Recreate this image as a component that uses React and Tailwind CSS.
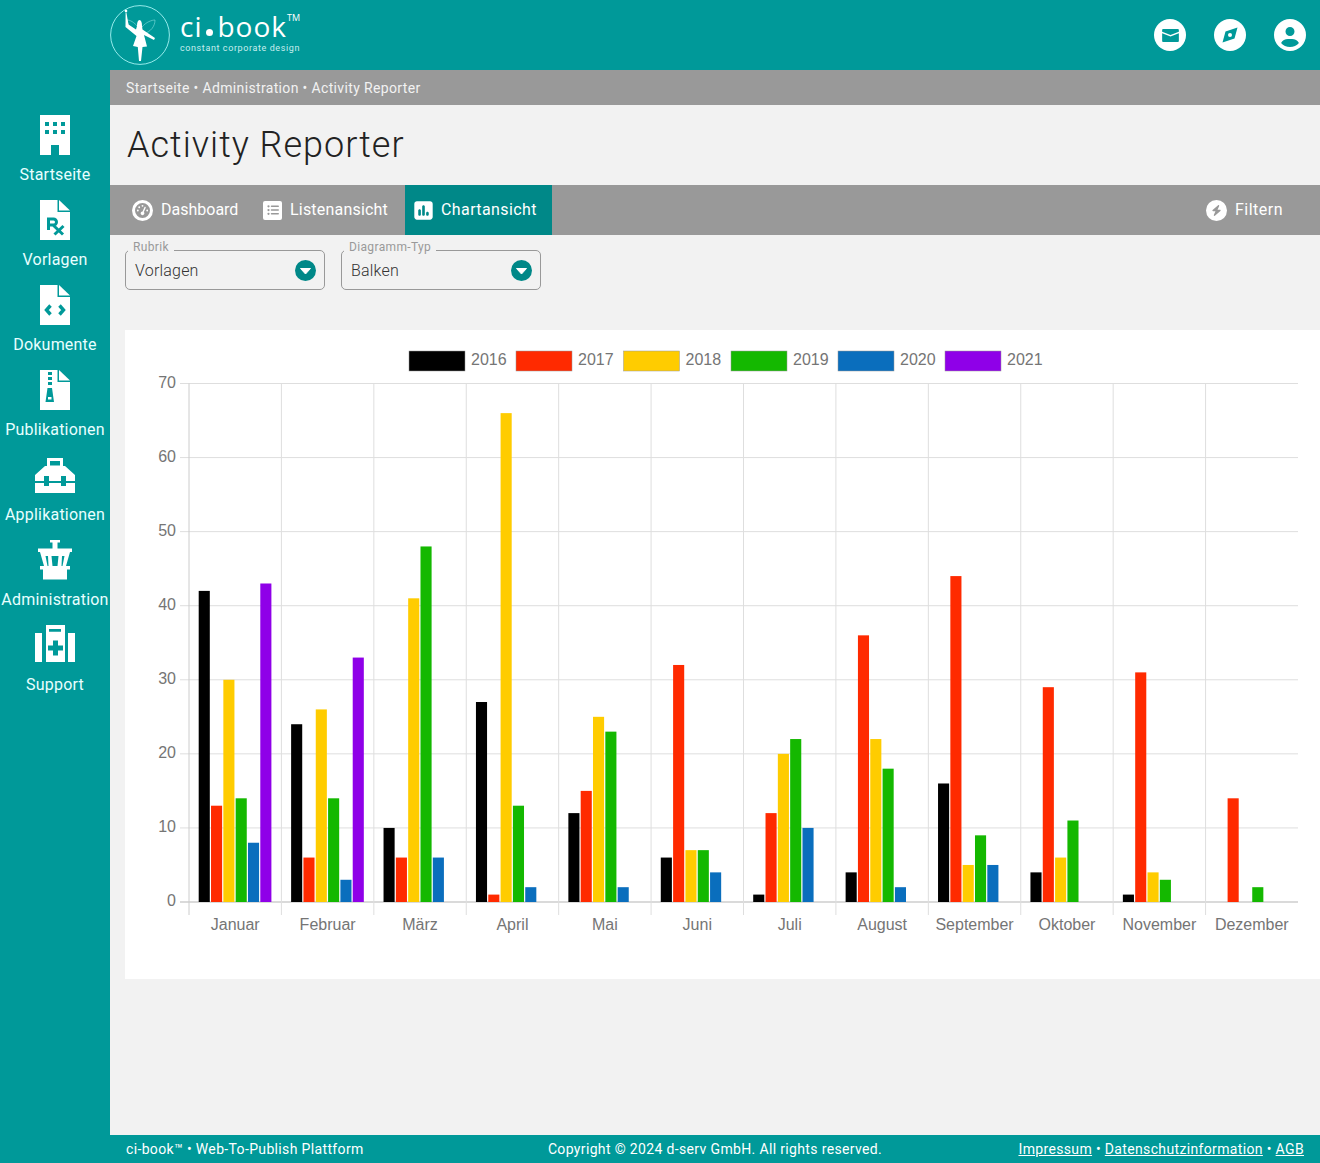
import { FaCircleUser, FaGaugeHigh, FaSquarePollVertical, FaBolt, FaListUl } from "react-icons/fa6";

const months = ["Januar", "Februar", "März", "April", "Mai", "Juni", "Juli", "August", "September", "Oktober", "November", "Dezember"];
const years = [
    { label: "2016", color: "#000000" },
    { label: "2017", color: "#ff2a00" },
    { label: "2018", color: "#ffcc00" },
    { label: "2019", color: "#14b800" },
    { label: "2020", color: "#0a6ebd" },
    { label: "2021", color: "#8f00e8" },
];
const data = [
    [42, 13, 30, 14, 8, 43],
    [24, 6, 26, 14, 3, 33],
    [10, 6, 41, 48, 6, 0],
    [27, 1, 66, 13, 2, 0],
    [12, 15, 25, 23, 2, 0],
    [6, 32, 7, 7, 4, 0],
    [1, 12, 20, 22, 10, 0],
    [4, 36, 22, 18, 2, 0],
    [16, 44, 5, 9, 5, 0],
    [4, 29, 6, 11, 0, 0],
    [1, 31, 4, 3, 0, 0],
    [0, 14, 0, 2, 0, 0],
];

const TEAL = "#009999";

function BuildingIcon() {
    return <svg viewBox="0 0 30 40" className="w-[30px] h-[40px]" fill="currentColor">
        <path fillRule="evenodd" d="M0 0H30V40H19V30H11V40H0ZM5 7V11H9V7ZM13 7V11H17V7ZM21 7V11H25V7ZM5 15V19H9V15ZM13 15V19H17V15ZM21 15V19H25V15Z" />
    </svg>;
}

function FileIcon({ children }) {
    return <svg viewBox="0 0 30 40" className="w-[30px] h-[40px]">
        <path d="M0 0H17.5V12H30V40H0Z" fill="#fff" />
        <path d="M19 0L30 10.5H19Z" fill="#fff" />
        {children}
    </svg>;
}

const PrescriptionIcon = () => <FileIcon>
    <path d="M8.5 30V19H13.5A3 3 0 0 1 13.5 25H8.5M13 25L23 34.5M23.5 26L14.5 34.5" fill="none" stroke={TEAL} strokeWidth="3" />
</FileIcon>;

const CodeIcon = () => <FileIcon>
    <path d="M10.5 20.5L6.5 25L10.5 29.5M19.5 20.5L23.5 25L19.5 29.5" fill="none" stroke={TEAL} strokeWidth="3.4" />
</FileIcon>;

const ZipIcon = () => <FileIcon>
    <path d="M8 2H12V5H8ZM8 7H12V10H8ZM8 12H12V15H8Z" fill={TEAL} />
    <path fillRule="evenodd" d="M7.5 18H12L14 32H5.5ZM8 27V29.5H11.5V27Z" fill={TEAL} />
</FileIcon>;

function ToolboxIcon() {
    return <svg viewBox="0 0 40 36" className="w-10 h-9" fill="#fff">
        <path fillRule="evenodd" d="M12 1H28V9H30L40 18V24H31V19H26V24H14V19H9V24H0V18L10 9H12ZM15 4V8.5H25V4Z" />
        <path d="M0 26H9V29H14V26H26V29H31V26H40V36H0Z" />
    </svg>;
}

function TowerIcon() {
    return <svg viewBox="0 0 34 40" className="w-[34px] h-10" fill="#fff">
        <path d="M12 0H22V2.5H19.5V8.5H34V12H32L28 26H32V29.5H29V39.5H5V29.5H2V26H6L2 12H0V8.5H14.5V2.5H12Z" />
        <path d="M7.5 16H10L10.5 26H9.5ZM13.5 16H20.5L19.5 26H14.5ZM24 16H26.5L24.5 26H23.5Z" fill={TEAL} />
    </svg>;
}

function KitIcon() {
    return <svg viewBox="0 0 40 37" className="w-10 h-[37px] mb-[3px]" fill="#fff">
        <path d="M0 8H7V37H0ZM33 8H40V37H33Z" />
        <path fillRule="evenodd" d="M11 0H30V37H11ZM14 4V6.7H26V4ZM18 15.5V20.5H13V25.5H18V30.5H23V25.5H28V20.5H23V15.5Z" />
    </svg>;
}

function MailBadge() {
    return <span className="w-8 h-8 rounded-full bg-white flex items-center justify-center text-[#009999]">
        <svg viewBox="0 0 18 14" className="w-[17px] h-[13px]" fill="currentColor">
            <path d="M1 0H17A1 1 0 0 1 18 1V3L9 6.5L0 3V1A1 1 0 0 1 1 0Z" />
            <path d="M0 4.6L9 8L18 4.6V13A1 1 0 0 1 17 14H1A1 1 0 0 1 0 13Z" />
        </svg>
    </span>;
}

function CompassBadge() {
    return <span className="w-8 h-8 rounded-full bg-white flex items-center justify-center">
        <svg viewBox="0 0 32 32" className="w-8 h-8">
            <path d="M23.5 8.5L20.5 19.5L8.5 23.5L11.5 12.5Z" fill="#009999" />
            <circle cx="16" cy="16" r="2" fill="#fff" />
        </svg>
    </span>;
}

function CaretBadge() {
    return <svg viewBox="0 0 21 21" className="w-[21px] h-[21px] mr-[-1px]">
        <circle cx="10.5" cy="10.5" r="10.5" fill="#008888" />
        <path d="M5.5 8.5H15.5L10.5 14Z" fill="#fff" stroke="#fff" strokeWidth="1" strokeLinejoin="round" />
    </svg>;
}

const navItems = [
    { label: "Startseite", icon: <BuildingIcon /> },
    { label: "Vorlagen", icon: <PrescriptionIcon /> },
    { label: "Dokumente", icon: <CodeIcon /> },
    { label: "Publikationen", icon: <ZipIcon /> },
    { label: "Applikationen", icon: <ToolboxIcon /> },
    { label: "Administration", icon: <TowerIcon /> },
    { label: "Support", icon: <KitIcon /> },
];

function Logo() {
    return <div className="flex items-start h-[70px]">
        <svg viewBox="0 0 60 60" className="w-[60px] h-[60px] mt-[5px]">
            <circle cx="30" cy="30" r="29.4" fill="none" stroke="#bff" strokeWidth="0.8" />
            <path d="M28 22C24 17 20 15 17 15C18 21 21 26 26 28M32 22C36 17 42 15 45 15C45 21 41 27 33 29" fill="none" stroke="#8dd" strokeWidth="0.6" />
            <circle cx="16" cy="6" r="1.3" fill="#fff" />
            <path d="M15.6 7.5L16.4 7.5L18.5 19.5L26 24.5L27 21Q27 15.5 29.5 15Q32 15.5 32 21L32.5 24.5L45 33L44 35L34 30L37 41.5L32.5 42L31 56H29L27.8 42L23 41L26.5 31L15.5 22Z" fill="#fff" />
        </svg>
        <div className="ml-2.5 pt-[11px] text-white">
            <div className="flex items-start h-[31px]">
                <span className="text-[28px] leading-[31px] font-medium font-['Open_Sans'] tracking-[1px]">ci</span>
                <span className="w-[7px] h-[7px] rounded-full bg-white mt-[18px] ml-[4px] mr-[4px]"></span>
                <span className="text-[28px] leading-[31px] font-medium font-['Open_Sans'] tracking-[1px]">book</span>
                <span className="text-[9px] leading-[14px] font-['Open_Sans']">TM</span>
            </div>
            <div className="text-[9px] leading-[12px] tracking-[0.6px] text-[#c8eeee]">constant corporate design</div>
        </div>
    </div>;
}

function SelectBox({ label, value }) {
    return <div className="relative w-[200px] h-10 rounded-[5px] border border-[#999] flex items-center justify-between px-[9px]">
        <span className="absolute -top-[14px] left-[2px] px-[5px] bg-[#f2f2f2] text-xs leading-[20px] tracking-[0.35px] text-[#999]">{label}</span>
        <span className="text-[#333] text-base font-light tracking-[0.2px] pt-px">{value}</span>
        <CaretBadge />
    </div>;
}

function Chart() {
    const left = 189, right = 1298, top = 383.5, bottom = 902;
    const catWidth = (right - left) / 12;
    const unit = (bottom - top) / 70;
    const ticks = [0, 10, 20, 30, 40, 50, 60, 70];
    const legendX = [409, 516, 623.5, 731, 838, 945];
    const labelFill = "#757575";
    return <svg viewBox="125 330 1195 649" className="block w-full h-[649px]">
        {years.map((y, i) => <g key={y.label}>
            <rect x={legendX[i]} y="351" width="56" height="20" fill={y.color} stroke="#999" strokeWidth="0.5" />
            <text x={legendX[i] + 62} y="365" fontSize="16" fill={labelFill} fontFamily="Liberation Sans, sans-serif">{y.label}</text>
        </g>)}
        {ticks.map(t => {
            const y = bottom - t * unit;
            return <g key={t}>
                <line x1={left - 9} x2={right} y1={y} y2={y} stroke={t === 0 ? "#b5b5b5" : "#dedede"} strokeWidth="1" />
                <text x={left - 13} y={y + 4} fontSize="16" textAnchor="end" fill={labelFill} fontFamily="Liberation Sans, sans-serif">{t}</text>
            </g>;
        })}
        {months.map((m, i) => <line key={m} x1={left + i * catWidth} x2={left + i * catWidth} y1={top} y2={bottom + 13} stroke={i === 0 ? "#ccc" : "#dedede"} strokeWidth="1" />)}
        {data.map((row, i) => row.map((v, j) => v > 0 && <rect key={i + "-" + j}
            x={left + i * catWidth + 9.7 + j * 12.32}
            y={bottom - v * unit}
            width="11.1"
            height={v * unit}
            fill={years[j].color} />))}
        {months.map((m, i) => <text key={m} x={left + (i + 0.5) * catWidth} y="930" fontSize="16" textAnchor="middle" fill={labelFill} fontFamily="Liberation Sans, sans-serif">{m}</text>)}
    </svg>;
}

export default function App() {
    return <div className="w-[1320px] h-[1163px] flex overflow-hidden bg-[#009999] font-['Roboto',sans-serif]">
        <aside className="w-[110px] shrink-0 pt-[115px] flex flex-col text-white">
            {navItems.map(item => <div key={item.label} className="h-[85px] flex flex-col items-center">
                <div className="h-10 flex items-center justify-center">{item.icon}</div>
                <div className="mt-[10px] text-base leading-[20px] tracking-[0.2px] whitespace-nowrap text-[#e8ffff]">{item.label}</div>
            </div>)}
        </aside>

        <div className="w-[1210px] flex flex-col">
            <header className="h-[70px] shrink-0 flex items-center justify-between pr-[14px] text-white">
                <Logo />
                <div className="flex items-center gap-7">
                    <MailBadge />
                    <CompassBadge />
                    <FaCircleUser className="text-[32px] text-white" />
                </div>
            </header>

            <div className="h-[35px] shrink-0 bg-[#999] px-4 flex items-center text-sm tracking-[0.35px] text-[#f2f2f2]">Startseite • Administration • Activity Reporter</div>

            <main className="flex-1 bg-[#f2f2f2] flex flex-col">
                <div className="h-20 shrink-0 px-[17px] flex items-center">
                    <h1 className="text-[36px] font-light text-[#222] tracking-[1px]">Activity Reporter</h1>
                </div>

                <div className="h-[50px] shrink-0 bg-[#999] flex items-stretch justify-between text-white text-base">
                    <div className="flex items-stretch">
                        <div className="flex items-center w-[153px] pl-[22px] gap-2"><span className="w-[21px] h-[21px] rounded-full bg-white flex items-center justify-center"><FaGaugeHigh className="text-[15px] text-[#999]" /></span>Dashboard</div>
                        <div className="flex items-center w-[142px] gap-2 tracking-[0.2px]"><span className="w-[19px] h-[19px] rounded-[2px] bg-white flex items-center justify-center"><FaListUl className="text-[12px] text-[#999]" /></span>Listenansicht</div>
                        <div className="flex items-center w-[147px] pl-[9px] gap-[7px] tracking-[0.4px] bg-[#008888]"><FaSquarePollVertical className="text-[21px] ml-[-1px]" />Chartansicht</div>
                    </div>
                    <div className="flex items-center pr-[37px] gap-2 tracking-[0.5px]"><span className="w-[21px] h-[21px] rounded-full bg-white flex items-center justify-center"><FaBolt className="text-[11px] text-[#999]" /></span>Filtern</div>
                </div>

                <div className="flex gap-4 pl-[15px] pt-[15px]">
                    <SelectBox label="Rubrik" value="Vorlagen" />
                    <SelectBox label="Diagramm-Typ" value="Balken" />
                </div>

                <div className="ml-[15px] mt-10 h-[649px] bg-white">
                    <Chart />
                </div>
            </main>

            <footer className="h-7 shrink-0 px-4 flex items-center justify-between text-sm tracking-[0.35px] text-white">
                <span className="w-[300px]">ci-book™ • Web-To-Publish Plattform</span>
                <span>Copyright © 2024 d-serv GmbH. All rights reserved.</span>
                <span className="w-[300px] text-right"><span className="underline">Impressum</span> • <span className="underline">Datenschutzinformation</span> • <span className="underline">AGB</span></span>
            </footer>
        </div>
    </div>;
}
